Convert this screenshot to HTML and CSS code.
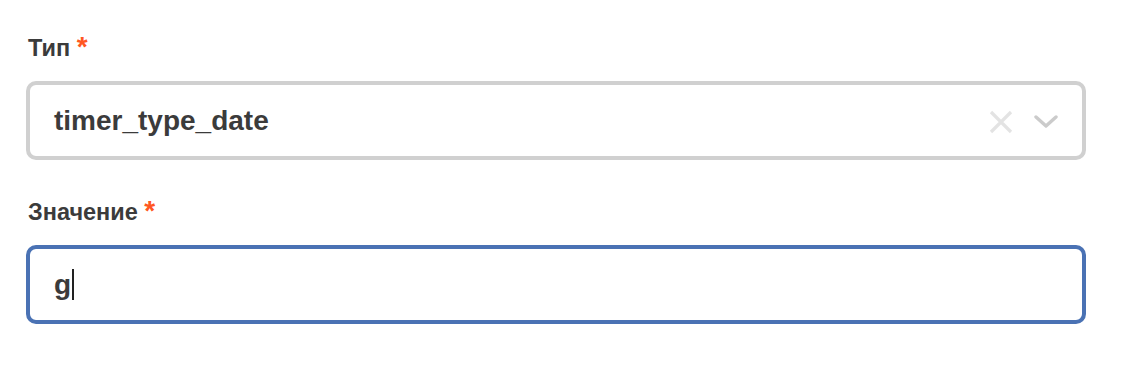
FILE: index.html
```html
<!DOCTYPE html>
<html lang="ru">
<head>
    <meta charset="UTF-8">
    <meta name="viewport" content="width=device-width, initial-scale=1.0">
    <title>Таймер</title>
    <link rel="stylesheet" href="styles.css">
</head>
<body>
    <form class="form">
        <div class="field">
            <label class="label">Тип <span class="req">*</span></label>
            <div class="select">
                <span class="select-value">timer_type_date</span>
                <span class="select-icons">
                    <svg class="icon-clear" width="26" height="26" viewBox="0 0 26 26">
                        <path d="M3 3 L23 23 M23 3 L3 23" stroke="#e3e3e3" stroke-width="3.2" fill="none"/>
                    </svg>
                    <svg class="icon-arrow" width="24" height="14" viewBox="0 0 24 14">
                        <path d="M2 2 L12 11 L22 2" stroke="#cbcbcb" stroke-width="3.4" fill="none" stroke-linecap="round" stroke-linejoin="round"/>
                    </svg>
                </span>
            </div>
        </div>

        <div class="field">
            <label class="label">Значение <span class="req">*</span></label>
            <div class="input focused">
                <span class="input-value">g</span><span class="caret"></span>
            </div>
        </div>
    </form>
</body>
</html>
```

FILE: styles.css
```css
body {
    margin: 0;
    background: #ffffff;
    font-family: "Liberation Sans", Arial, sans-serif;
    color: #3b3b3b;
}
.form {
    width: 1060px;
    padding: 33px 0 0 26px;
}
.field {
    margin-bottom: 37px;
}
.label {
    display: block;
    font-size: 23.5px;
    font-weight: bold;
    line-height: 28px;
    padding-left: 2px;
    margin-bottom: 19px;
}
.req {
    color: #ff5722;
    font-size: 28px;
}
.select,
.input {
    box-sizing: border-box;
    height: 79px;
    border: 4px solid #d0d0d0;
    border-radius: 10px;
    display: flex;
    align-items: center;
    padding: 0 24px 0 24px;
    font-size: 28px;
    font-weight: bold;
}
.select-value {
    flex: 1;
}
.select-icons {
    display: flex;
    align-items: center;
    gap: 20px;
    margin-top: 2px;
}
.input.focused {
    border-color: #4a72b4;
}
.caret {
    display: inline-block;
    width: 2px;
    height: 31px;
    background: #222;
    margin-left: 1px;
}
```
